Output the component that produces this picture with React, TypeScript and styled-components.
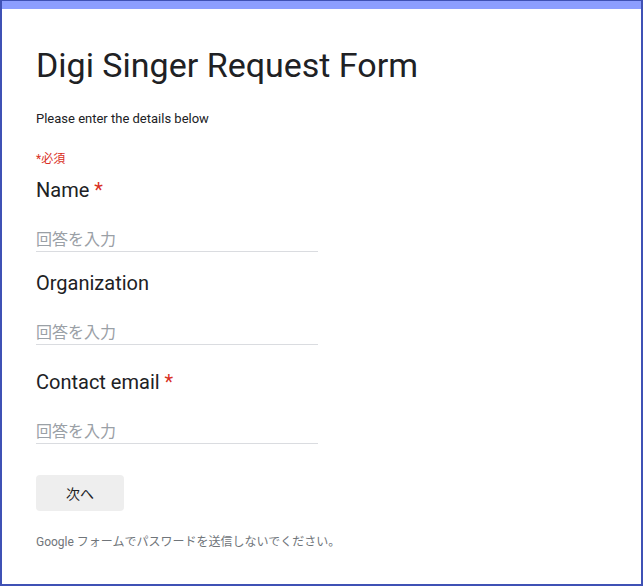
import React from "react";
import styled, { createGlobalStyle } from "styled-components";

const Global = createGlobalStyle`
  html, body { margin: 0; padding: 0; background: #fff; }
  body { font-family: Roboto, "Noto Sans CJK JP", sans-serif; }
`;

const Frame = styled.div`
  box-sizing: border-box;
  width: 643px;
  height: 586px;
  border: 2px solid #3f51b5;
  border-top-width: 1px;
  background: #fff;
  display: flex;
  flex-direction: column;
`;

const TopBar = styled.div`
  height: 8px;
  background: #8c9eff;
  flex: none;
`;

const Content = styled.div`
  padding: 36px 34px 0;
  display: flex;
  flex-direction: column;
`;

const Title = styled.h1`
  margin: 0;
  font-family: Roboto, sans-serif;
  font-weight: 400;
  font-size: 34px;
  line-height: 40px;
  color: #202124;
`;

const Description = styled.p`
  margin: 25px 0 0;
  font-size: 13px;
  line-height: 18px;
  color: #202124;
`;

const RequiredNote = styled.div`
  margin-top: 23px;
  font-size: 12px;
  line-height: 16px;
  color: #d93025;
`;

const Question = styled.div<{ $gap: number }>`
  margin-top: ${(p) => p.$gap}px;
  display: flex;
  flex-direction: column;
`;

const Label = styled.div`
  font-size: 20px;
  line-height: 24px;
  color: #202124;
`;

const Star = styled.span`
  color: #d93025;
`;

const Input = styled.input`
  box-sizing: border-box;
  margin-top: 25px;
  width: 282px;
  height: 25px;
  padding: 0;
  border: none;
  border-bottom: 1px solid #dadce0;
  outline: none;
  font-family: Roboto, "Noto Sans CJK JP", sans-serif;
  font-size: 16px;
  line-height: 24px;
  color: #202124;
  background: transparent;
  &::placeholder {
    color: #9aa0a6;
  }
`;

const NextButton = styled.button`
  margin-top: 31px;
  width: 88px;
  height: 36px;
  border: none;
  border-radius: 4px;
  background: #eeeeee;
  font-family: Roboto, "Noto Sans CJK JP", sans-serif;
  font-size: 14px;
  color: #202124;
  cursor: pointer;
`;

const Footer = styled.p`
  margin: 23px 0 0;
  font-size: 12px;
  line-height: 16px;
  color: #70757a;
`;

const questions = [
  { label: "Name", required: true, gap: 11 },
  { label: "Organization", required: false, gap: 19 },
  { label: "Contact email", required: true, gap: 25 },
];

export default function App() {
  return (
    <>
      <Global />
      <Frame>
        <TopBar />
        <Content>
          <Title>Digi Singer Request Form</Title>
          <Description>Please enter the details below</Description>
          <RequiredNote>*必須</RequiredNote>
          {questions.map((q) => (
            <Question key={q.label} $gap={q.gap}>
              <Label>
                {q.label}
                {q.required && <Star> *</Star>}
              </Label>
              <Input placeholder="回答を入力" />
            </Question>
          ))}
          <div>
            <NextButton>次へ</NextButton>
          </div>
          <Footer>Google フォームでパスワードを送信しないでください。</Footer>
        </Content>
      </Frame>
    </>
  );
}
